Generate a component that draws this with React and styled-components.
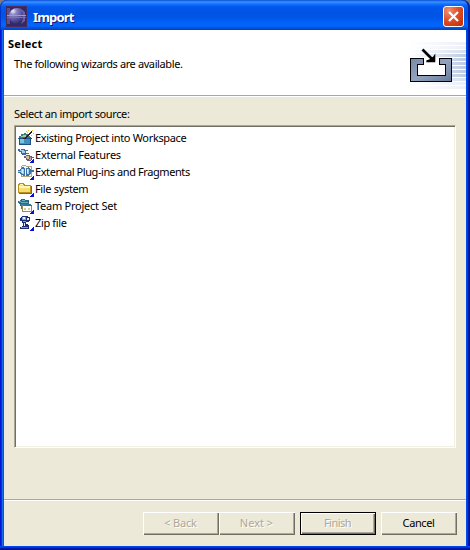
import React from "react";
import styled, { createGlobalStyle } from "styled-components";

const Global = createGlobalStyle`
  body { margin: 0; background: #7b7b7b; }
  * { box-sizing: border-box; }
`;

const Window = styled.div`
  width: 470px;
  height: 550px;
  display: flex;
  flex-direction: column;
  overflow: hidden;
  border-radius: 7px 7px 0 0;
  background: #0831d9;
  font: 11px/14px "Noto Sans", "DejaVu Sans Condensed", sans-serif;
  color: #000;
`;

const TitleBar = styled.div`
  height: 30px;
  flex: none;
  display: flex;
  align-items: center;
  padding: 0 3px 0 6px;
  border-radius: 7px 7px 0 0;
  box-shadow: inset 1px 0 #0033cc, inset -2px 0 #0022a8;
  background: linear-gradient(#0a50d8 0, #3a93ff 2px, #1670ff 4px, #0058ee 7px, #0054e3 12px,
    #0056e8 18px, #0064fb 23px, #0066ff 26px, #0050dc 28px, #0040c0 30px);
`;

const Title = styled.div`
  flex: 1;
  margin: 4px 0 0 6px;
  font: bold 13px/16px "Noto Sans", sans-serif;
  letter-spacing: -0.85px;
  color: #fff;
  text-shadow: 1px 1px #0a1883;
`;

const AppIcon = styled.svg`
  width: 21px;
  height: 21px;
  margin-top: 3px;
`;

const CloseButton = styled.button`
  width: 21px;
  height: 21px;
  margin: 3px 3px 0 0;
  padding: 0;
  display: grid;
  place-items: center;
  border: 1px solid #fff;
  border-radius: 3px;
  background: radial-gradient(circle at 25% 20%, #ee9175 0, #e0502b 45%, #cf3b12 75%, #b92c08 100%);
`;

const Frame = styled.div`
  flex: 1;
  min-height: 0;
  padding: 0 4px 4px;
  background: linear-gradient(#0046ea 0 1px, #0033d4 1px 2px, #0018a8 2px 3px, #00138c 3px) bottom / 100% 4px no-repeat,
    linear-gradient(90deg, #0019cf 0 1px, #0831d9 1px 2px, #166aee 2px 3px, #0855dd 3px 4px,
      #ece9d8 4px 466px, #0048f0 466px 467px, #003ddc 467px 468px, #001ea0 468px 469px, #00138c 469px);
`;

const Dialog = styled.div`
  height: 100%;
  display: flex;
  flex-direction: column;
  background: #ece9d8;
`;

const Header = styled.div`
  height: 67px;
  flex: none;
  display: flex;
  justify-content: space-between;
  background: #fff;
  border-bottom: 1px solid #fff;
  box-shadow: inset 0 -1px #aca899;
`;

const Heading = styled.div`
  margin: 7px 0 6px 4px;
  font-weight: bold;
  letter-spacing: 0.25px;
`;

const Description = styled.div`
  margin-left: 10px;
  letter-spacing: -0.39px;
`;

const Body = styled.div`
  flex: 1;
  padding: 10px 10px 0;
`;

const Label = styled.div`
  height: 18px;
  letter-spacing: -0.38px;
`;

const List = styled.div`
  height: 323px;
  padding: 3px 3px;
  background: #fff;
  border: 1px solid;
  border-color: #aca899 #fff #fff #aca899;
  box-shadow: inset 1px 1px #716f64, inset -1px -1px #f1efe2;
`;

const Item = styled.div`
  height: 17px;
  display: flex;
  align-items: center;
  white-space: nowrap;
  letter-spacing: ${(p) => p.$spacing}px;
`;

const ItemIcon = styled.svg`
  width: 16px;
  height: 16px;
  flex: none;
  margin-right: 1px;
`;

const Footer = styled.div`
  height: 47px;
  flex: none;
  display: flex;
  justify-content: flex-end;
  padding: 12px 9px 0 0;
  border-top: 1px solid #aca899;
  box-shadow: inset 0 1px #fff;
`;

const Button = styled.button`
  width: 76px;
  height: 23px;
  margin-left: ${(p) => p.$gap || 0}px;
  padding: 0 1px 1px 0;
  font: inherit;
  letter-spacing: ${(p) => p.$spacing || 0}px;
  background: #ece9d8;
  color: ${(p) => (p.disabled ? "#aca899" : "#000")};
  text-shadow: ${(p) => (p.disabled ? "1px 1px #fff" : "none")};
  border: ${(p) => (p.$default ? "1px solid #000" : "0")};
  box-shadow: inset 1px 1px #fff, inset -1px -1px #716f64, inset -2px -2px #aca899;
`;

const EclipseIcon = () => (
  <AppIcon viewBox="0 0 21 21">
    <defs>
      <radialGradient id="moon" cx=".25" cy=".2" r=".9">
        <stop offset="0" stopColor="#f0f0ff" />
        <stop offset=".25" stopColor="#8c86c4" />
        <stop offset=".7" stopColor="#4c4690" />
        <stop offset="1" stopColor="#28205c" />
      </radialGradient>
    </defs>
    <path fill="#33286a" d="M0 0h21v21H0z" />
    <path fill="#5d4c8e" d="M0 2h4v16H0z" />
    <circle cx="11" cy="10" r="8" fill="url(#moon)" />
    <path fill="#6a5fa4" d="M14 2l5 4v9l-4 3 2-5V7z" />
    <path stroke="#8c9cf0" d="M1 9.500h20" />
    <path stroke="#6274d4" d="M1 11.500h20" />
    <path fill="none" stroke="#4a2c5c" d="M.500.500h20v20H.500z" />
  </AppIcon>
);

const ImportArt = () => (
  <svg width="60" height="65" viewBox="0 0 60 65" shapeRendering="crispEdges">
    <defs>
      <linearGradient id="stripe">
        <stop offset=".05" stopColor="#bccae3" stopOpacity="0" />
        <stop offset="1" stopColor="#bccae3" />
      </linearGradient>
      <linearGradient id="tray" x2="1" y2="1">
        <stop stopColor="#7589a8" />
        <stop offset=".5" stopColor="#93a3be" />
        <stop offset="1" stopColor="#657998" />
      </linearGradient>
    </defs>
    {[12, 16, 20, 24, 28, 32, 36, 40, 44, 48, 52, 56].map((y) => (
      <rect key={y} y={y} width="60" height="3" fill="url(#stripe)" opacity={y < 19 || y > 51 ? 0.3 : y < 23 || y > 45 ? 0.6 : 1} />
    ))}
    <path d="M4.500 28.500h13v6h-6v11h28v-11h-6v-6h12v23h-41z" fill="url(#tray)" stroke="#000" />
    <path d="M12 35h6v-7h15v7h6v10H12z" fill="#fff" />
    <g shapeRendering="auto">
      <path d="M16.500 19.500l9.500 9.500" stroke="#000" strokeWidth="2.600" />
      <path d="M29.300 23.500v8.800h-9v-1.800l4-1.500 3-2.500z" />
    </g>
  </svg>
);

const Corner = () => <path fill="#0a12d2" d="M15 12h1v4h-4v-1h1v-1h1v-1h1z" />;

const icons = {
  wizard: (
    <>
      <path fill="#1f4f86" d="M1 7h12v8H1zM0 8h14v1H0z" />
      <path fill="#3f8fc0" d="M2 9h10v5H2z" />
      <path fill="#7cc4dc" d="M2 9h4v4H2z" />
      <path fill="#3c7c78" d="M1 8V6h2V4h3V3h2v1h2v2h2v2z" />
      <path fill="#9cc89c" d="M3 6h2V5h3v2H3z" />
      <path fill="#2b1c20" d="M6 7h2V6h1V5h1V4h1V3h1V2h1V1h1V0h1v2h-1v1h-1v1h-1v1h-1v1h-1v1H9v1H6z" transform="translate(-1 1)" />
      <path fill="#e8b820" d="M8 1h1v1H8zM10 0h1v1h-1zM14 0h1v1h-1zM15 3h1v1h-1zM13 5h1v1h-1zM10 3h-1V2h1z" />
    </>
  ),
  features: (
    <>
      <path fill="#3f6a98" d="M0 2h2v1h1V2h4v1h3v1H8v2h3v1H8v1H4V7H3V5H1V4H0z" />
      <path fill="#a9cfe6" d="M2 3h4v1H2zM4 4h3v2H4z" />
      <path fill="#6d5a78" d="M6 9h2V8h4v1h2v1h2v1h-2v2h-1v1H9v-1H8v-2H6z" />
      <path fill="#d8c090" d="M8 9h3v3H9v-1H8z" />
      <path fill="#b8a4c0" d="M12 10h1v3h-2v-1h1z" />
      <Corner />
    </>
  ),
  plugins: (
    <>
      <path fill="#f8f4dc" stroke="#b0a684" d="M3.500 2.500l1-1h3l1 1h5v10h-10z" />
      <path fill="#3a72ac" d="M0 6h2V5h1V4h1V3h2v1h1v8H5v-1H3v-1H2V9H0zM8 4h2V3h1v1h1v1h1v1h3v2h-3v2h-1v1h-1v1H8z" />
      <path fill="#9ccdf0" d="M3 5h3v5H4V9H3zM9 5h2v5H9zM0 7h3v1H0z" />
      <path fill="#d8eefa" d="M4 5h1v4H4zM9 5h1v4H9z" />
      <Corner />
    </>
  ),
  folder: (
    <>
      <path fill="#f8dc70" stroke="#b8901c" d="M.500 11.500v-8h1v-1h4v1h1v1h6v7z" />
      <path fill="#fff6b8" d="M1 5h11v2H1zM2 3h3v1H2z" />
      <path fill="#8c6814" d="M1 12h12V5h1v8H1z" />
      <Corner />
    </>
  ),
  team: (
    <>
      <path fill="#2c6c80" d="M0 3h2V2h1V1h4v1h4v4h2v2H2V6H1V5H0z" />
      <path fill="#68b0bc" d="M1 3h2v1H1zM4 2h3v1H4zM3 4h7v1H3z" />
      <path fill="#3a7ca0" d="M3 6h8v5H3z" />
      <path fill="#fff" stroke="#968c5c" d="M4.500 7.500h9v6h-9z" />
      <path fill="#3c6cb0" d="M5 7h9v1H5z" />
      <path fill="#d8cc90" d="M6 10h2v2H6zM10 10h2v2h-2z" />
      <Corner />
    </>
  ),
  zip: (
    <>
      <path fill="#1c2c70" d="M4 1h6v1h2v4h-1v1H8v2h2v1h1v4H2v-2h2v-1h1V8H4V6H2V3h1V2h1z" />
      <path fill="#7ca0e0" d="M4 2h4v3H4zM5 6h3v1H5zM3 12h7v1H3z" />
      <path fill="#e8f0ff" d="M5 2h2v2H5zM9 3h2v2H9zM6 8h1v3H6z" />
      <Corner />
    </>
  ),
};

const sources = [
  ["wizard", "Existing Project into Workspace", -0.34],
  ["features", "External Features", -0.24],
  ["plugins", "External Plug-ins and Fragments", -0.42],
  ["folder", "File system", -0.34],
  ["team", "Team Project Set", -0.25],
  ["zip", "Zip file", -0.35],
];

export default function App() {
  return (
    <>
      <Global />
      <Window>
        <TitleBar>
          <EclipseIcon />
          <Title>Import</Title>
          <CloseButton aria-label="Close">
            <svg width="13" height="13" viewBox="0 0 13 13">
              <path d="M2 2l9 9M11 2l-9 9" stroke="#fff" strokeWidth="2.200" />
            </svg>
          </CloseButton>
        </TitleBar>
        <Frame>
          <Dialog>
            <Header>
              <div>
                <Heading>Select</Heading>
                <Description>The following wizards are available.</Description>
              </div>
              <ImportArt />
            </Header>
            <Body>
              <Label>Select an import source:</Label>
              <List>
                {sources.map(([icon, text, spacing]) => (
                  <Item key={icon} $spacing={spacing}>
                    <ItemIcon viewBox="0 0 16 16" fill="none" shapeRendering="crispEdges">
                      {icons[icon]}
                    </ItemIcon>
                    {text}
                  </Item>
                ))}
              </List>
            </Body>
            <Footer>
              <Button disabled $spacing={-0.2}>&lt; Back</Button>
              <Button disabled>Next &gt;</Button>
              <Button disabled $default $gap={5} $spacing={-0.5}>Finish</Button>
              <Button $gap={5} $spacing={-0.4}>Cancel</Button>
            </Footer>
          </Dialog>
        </Frame>
      </Window>
    </>
  );
}
